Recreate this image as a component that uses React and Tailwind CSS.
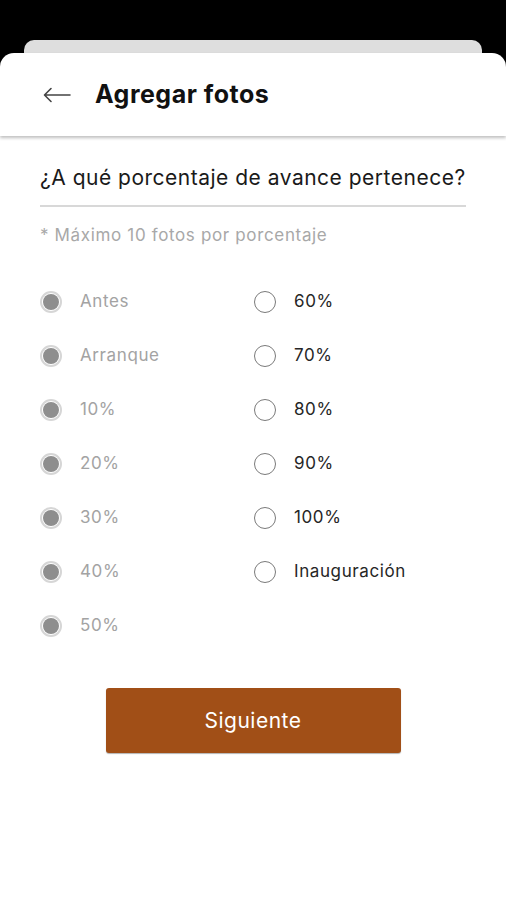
const left = ['Antes', 'Arranque', '10%', '20%', '30%', '40%', '50%'];
const right = ['60%', '70%', '80%', '90%', '100%', 'Inauguración'];

function Radio({ label, done }) {
  return (
    <div className="h-[54px] flex items-center">
      {done ? (
        <span className="w-[22px] h-[22px] rounded-full border-[2px] border-[#d6d6d6] flex items-center justify-center">
          <span className="w-[16px] h-[16px] rounded-full bg-[#8e8e8e]" />
        </span>
      ) : (
        <span className="w-[22px] h-[22px] rounded-full border-[1.5px] border-[#7a7a7a]" />
      )}
      <span className={`ml-[18px] text-[17px] tracking-[0.6px] ${done ? 'text-[#a3a3a3]' : 'text-[#262626]'}`}>{label}</span>
    </div>
  );
}

export default function App() {
  return (
    <div className="w-full h-[900px] bg-black flex flex-col font-['Inter',sans-serif] overflow-hidden">
      <div className="pt-[40px]" />
      <div className="mx-[24px] h-[13px] bg-[#dedede] rounded-t-[10px]" />
      <div className="flex-1 bg-white rounded-t-[14px] flex flex-col">
        <header className="h-[83px] flex items-center pl-[43px] shadow-[0_2px_3px_rgba(0,0,0,0.25)]">
          <svg width="28" height="16" viewBox="0 0 28 16" fill="none" stroke="#444" strokeWidth="1.6" strokeLinecap="round" strokeLinejoin="round">
            <path d="M27 8H2M8 1.5L1.5 8L8 14.5" />
          </svg>
          <h1 className="ml-[24px] text-[25px] font-bold text-[#111] tracking-[0.5px]">Agregar fotos</h1>
        </header>
        <div className="px-[40px]">
          <p className="mt-[29px] text-[21px] leading-[26px] tracking-[0.5px] text-[#1a1a1a]">¿A qué porcentaje de avance pertenece?</p>
          <div className="mt-[14px] h-[2px] bg-[#d8d8d8]" />
          <p className="mt-[17px] text-[17px] leading-[22px] tracking-[0.65px] text-[#a8a8a8]">* Máximo 10 fotos por porcentaje</p>
          <div className="mt-[29px] grid grid-cols-[214px_1fr]">
            <div>
              {left.map((l) => (
                <Radio key={l} label={l} done />
              ))}
            </div>
            <div>
              {right.map((l) => (
                <Radio key={l} label={l} />
              ))}
            </div>
          </div>
        </div>
        <div className="mt-[35px] flex justify-center">
          <button className="w-[295px] h-[65px] bg-[#a14f17] rounded-[3px] text-white text-[21px] tracking-[0.5px] shadow-[0_1px_1px_rgba(0,0,0,0.3)]">
            Siguiente
          </button>
        </div>
      </div>
    </div>
  );
}
